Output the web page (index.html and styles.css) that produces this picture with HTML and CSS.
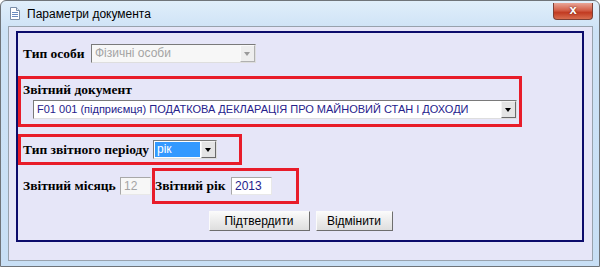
FILE: index.html
```html
<!DOCTYPE html>
<html lang="uk">
<head>
    <meta charset="UTF-8">
    <title>Параметри документа</title>
    <link rel="stylesheet" href="styles.css">
</head>
<body>
    <div class="window">
        <!-- Title bar -->
        <div class="titlebar">
            <svg class="doc-icon" width="10" height="13" viewBox="0 0 10 13">
                <path d="M0.5 0.5 H6.5 L9.5 3.5 V12.5 H0.5 Z" fill="#fff" stroke="#7a8ea8"/>
                <path d="M6.5 0.5 V3.5 H9.5" fill="#dfe8f2" stroke="#7a8ea8"/>
                <path d="M2 5.5 H8 M2 7.5 H8 M2 9.5 H8" stroke="#6b8cc0"/>
            </svg>
            <span class="title">Параметри документа</span>
            <div class="close-btn">x</div>
        </div>

        <!-- Client area -->
        <div class="client">
            <div class="panel">
                <div class="row row-person">
                    <span class="label">Тип особи</span>
                    <div class="combo combo-person disabled">
                        <span class="combo-text">Фізичні особи</span>
                        <span class="combo-arrow"></span>
                    </div>
                </div>

                <div class="mark mark-doc">
                    <div class="label">Звітний документ</div>
                    <div class="combo combo-doc">
                        <span class="combo-text">F01 001 (підприємця) ПОДАТКОВА ДЕКЛАРАЦІЯ ПРО МАЙНОВИЙ СТАН І ДОХОДИ</span>
                        <span class="combo-arrow"></span>
                    </div>
                </div>

                <div class="mark mark-period">
                    <span class="label">Тип звітного періоду</span>
                    <div class="combo combo-period">
                        <span class="combo-text selected">рік</span>
                        <span class="combo-arrow"></span>
                    </div>
                </div>

                <div class="row row-date">
                    <span class="label">Звітний місяць</span>
                    <div class="field field-month disabled">12</div>
                    <div class="mark mark-year">
                        <span class="label">Звітний рік</span>
                        <div class="field field-year">2013</div>
                    </div>
                </div>

                <div class="buttons">
                    <button class="btn btn-ok">Підтвердити</button>
                    <button class="btn btn-cancel">Відмінити</button>
                </div>
            </div>
        </div>
    </div>
</body>
</html>
```

FILE: styles.css
```css
/* General Styles */
body {
    margin: 0;
    padding: 0;
    font-family: "Liberation Sans", Arial, sans-serif;
    font-size: 12px;
    background: #fff;
}

.window {
    width: 600px;
    height: 267px;
    box-sizing: border-box;
    padding: 0 6px 6px 7px;
    border: 1px solid #6f7479;
    border-radius: 6px 6px 0 0;
    background: linear-gradient(to bottom, #e0eefa 0, #cde2f6 30px, #c8dff5 100%);
}

/* Title bar */
.titlebar {
    height: 25px;
    display: flex;
    align-items: center;
}

.doc-icon {
    margin: 0 7px 0 2px;
}

.title {
    color: #000;
    font-size: 12px;
}

.close-btn {
    margin-left: auto;
    margin-top: -5px;
    width: 38px;
    height: 16px;
    border: 1px solid #7d3f35;
    border-top: none;
    border-radius: 0 0 4px 4px;
    background: linear-gradient(to bottom, #e9a596 0, #d4604a 45%, #c23b22 60%, #d86d4f 100%);
    color: #fff;
    font-weight: bold;
    font-size: 13px;
    line-height: 14px;
    text-align: center;
    text-shadow: 0 0 2px #5a1a10;
}

/* Client area */
.client {
    height: 235px;
    box-sizing: border-box;
    border: 1px solid #98a2ad;
    background: #e6e6f8;
    padding: 4px 8px 0 7px;
}

.panel {
    height: 211px;
    box-sizing: border-box;
    border: 2px solid #0c0c6c;
    padding-top: 11px;
}

.label {
    font-family: "Liberation Serif", "Times New Roman", serif;
    font-weight: bold;
    font-size: 13.5px;
    color: #000;
    white-space: nowrap;
}

.row {
    display: flex;
    align-items: center;
    padding-left: 5px;
}

.row-person .label {
    width: 68px;
}

/* Red highlight boxes */
.mark {
    border: 3px solid #e81c2a;
    box-sizing: border-box;
}

.mark-doc {
    width: 504px;
    height: 51px;
    margin-top: 13px;
    padding: 3px 0 0 2px;
}

.mark-doc .label {
    line-height: 16px;
}

.mark-doc .combo {
    margin: 2px 0 0 10px;
}

.mark-period {
    width: 224px;
    height: 31px;
    margin-top: 7px;
    display: flex;
    align-items: center;
    padding-left: 2px;
}

.mark-period .label {
    width: 130px;
}

.row-date {
    margin-top: 3px;
    height: 36px;
}

.row-date > .label {
    width: 97px;
}

.mark-year {
    width: 147px;
    height: 36px;
    margin-left: 1px;
    display: flex;
    align-items: center;
}

.mark-year .label {
    width: 76px;
}

/* Combo boxes */
.combo {
    display: flex;
    align-items: stretch;
    height: 19px;
    box-sizing: border-box;
    border: 1px solid;
    border-color: #7a7a7a #dedede #dedede #7a7a7a;
    background: #fff;
    font-size: 11px;
}

.combo-text {
    flex: 1;
    padding-left: 3px;
    line-height: 17px;
    color: #26228c;
    white-space: nowrap;
    overflow: hidden;
}

.combo-text.selected {
    background: #3399ff;
    color: #fff;
    margin: 1px;
    line-height: 15px;
    padding-left: 2px;
    font-size: 12px;
}

.combo-arrow {
    width: 15px;
    box-sizing: border-box;
    border: 1px solid;
    border-color: #f4f4f4 #6a6a6a #6a6a6a #f4f4f4;
    background: #e4e4e4;
    position: relative;
}

.combo-arrow::after {
    content: "";
    position: absolute;
    left: 3px;
    top: 6px;
    border-left: 3.5px solid transparent;
    border-right: 3.5px solid transparent;
    border-top: 4px solid #000;
}

.combo-person {
    width: 165px;
    font-size: 12px;
}

.combo-doc {
    width: 484px;
}

.combo-period {
    width: 64px;
}

.disabled .combo-text,
.field.disabled {
    color: #a4a4a4;
}

.combo.disabled {
    background: #f7f7f7;
}

.combo.disabled .combo-arrow {
    background: #eeeeee;
    border-color: #fafafa #b0b0b0 #b0b0b0 #fafafa;
}

.combo.disabled .combo-arrow::after {
    border-top-color: #9a9a9a;
}

/* Text fields */
.field {
    height: 18px;
    box-sizing: border-box;
    border: 1px solid;
    border-color: #a8a8a8 #e8e8e8 #e8e8e8 #a8a8a8;
    background: #fff;
    line-height: 16px;
    padding-left: 3px;
    color: #26228c;
}

.field-month {
    width: 31px;
    background: #f7f7f7;
}

.field-year {
    width: 41px;
}

/* Buttons */
.buttons {
    display: flex;
    justify-content: center;
    gap: 6px;
    margin-top: 7px;
    padding-left: 1px;
}

.btn {
    height: 20px;
    box-sizing: border-box;
    border: 1px solid;
    border-color: #fbfbfb #6e6e6e #6e6e6e #fbfbfb;
    background: linear-gradient(to bottom, #fafafa, #ececec 50%, #dedede);
    font-family: "Liberation Sans", Arial, sans-serif;
    font-size: 12px;
    color: #000;
    padding: 0;
    cursor: pointer;
}

.btn-ok {
    width: 101px;
}

.btn-cancel {
    width: 77px;
}
```
